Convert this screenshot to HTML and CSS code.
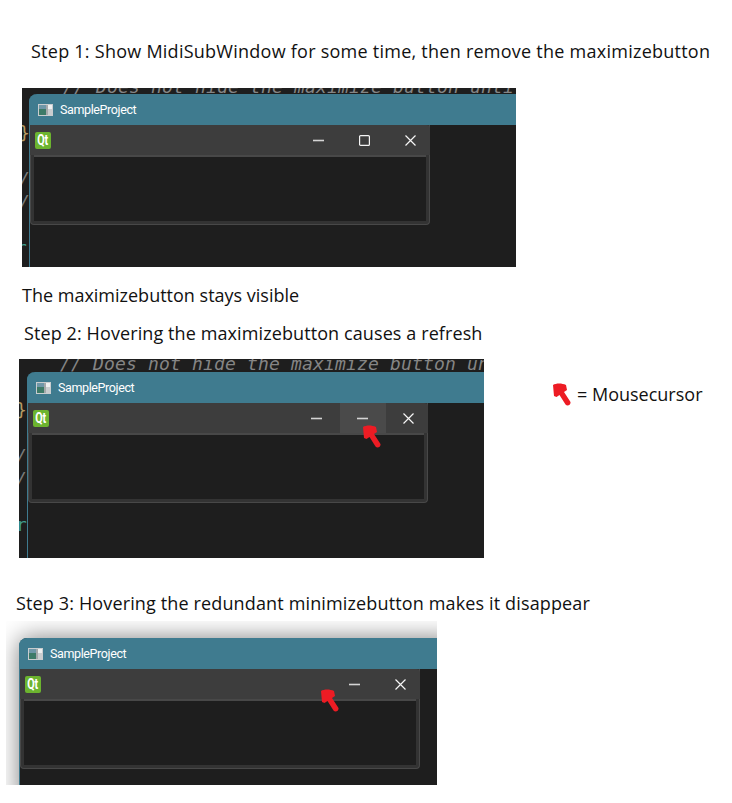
FILE: index.html
```html
<!DOCTYPE html>
<html lang="en">
<head>
<meta charset="utf-8">
<title>MdiSubWindow steps</title>
<link rel="stylesheet" href="styles.css">
</head>
<body>
<svg class="defs" width="0" height="0" aria-hidden="true">
  <symbol id="app" viewBox="0 0 15 12">
    <rect width="15" height="12" fill="#c9cdcf"/>
    <rect x="1" y="1" width="7" height="10" fill="#3d7a68"/>
    <rect x="1" y="1" width="7" height="4" fill="#6f97a8"/>
    <rect x="8" y="1" width="2" height="10" fill="#a4a8aa"/>
    <rect x="10" y="1" width="4" height="4" fill="#eef0f0"/>
  </symbol>
  <symbol id="min" viewBox="0 0 11 11"><rect x="0" y="4.700" width="11" height="1.600" fill="#d4d4d4"/></symbol>
  <symbol id="max" viewBox="0 0 11 11"><rect x=".6" y=".6" width="9.800" height="9.800" rx="1" fill="none" stroke="#f4f4f4" stroke-width="1.200"/></symbol>
  <symbol id="close" viewBox="0 0 11 11"><path d="M.5.5l10 10M10.500.5l-10 10" fill="none" stroke="#f6f6f6" stroke-width="1.200"/></symbol>
  <symbol id="cursor" viewBox="0 0 18 23">
    <path d="M0 2C3 0 9 0 13 2L14 7L11 9L17.500 19C18 22.500 14 23.500 12.500 21.500L6.500 12L3.500 14L1 13Z" fill="#ed1c24"/>
  </symbol>
</svg>

<main class="page">
  <p class="caption step-one">Step 1: Show MidiSubWindow for some time, then remove the maximizebutton</p>

  <section class="shot shot-one">
    <div class="code code-one">
      <div class="line comment">// Does not hide the maximize button until</div>
      <div class="line gutter">&nbsp;</div>
      <div class="line gutter brace">}</div>
      <div class="line gutter">&nbsp;</div>
      <div class="line gutter slash">/</div>
      <div class="line gutter slash">/</div>
      <div class="line gutter">&nbsp;</div>
      <div class="line gutter keyword">r</div>
    </div>
    <div class="window window-one">
      <div class="window-title"><svg class="app-icon"><use href="#app"/></svg><span>SampleProject</span></div>
      <div class="sub">
        <div class="sub-bar">
          <span class="qt"><span class="qt-text">Qt</span></span>
          <span class="btn"><svg class="ico"><use href="#min"/></svg></span>
          <span class="btn"><svg class="ico"><use href="#max"/></svg></span>
          <span class="btn btn-close"><svg class="ico"><use href="#close"/></svg></span>
        </div>
        <div class="sub-body"></div>
      </div>
    </div>
  </section>

  <p class="caption result">The maximizebutton stays visible</p>
  <p class="caption step-two">Step 2: Hovering the maximizebutton causes a refresh</p>

  <div class="row">
    <section class="shot shot-two">
      <div class="code code-two">
        <div class="line comment">// Does not hide the maximize button until</div>
        <div class="line gutter">&nbsp;</div>
        <div class="line gutter brace">}</div>
        <div class="line gutter">&nbsp;</div>
        <div class="line gutter slash">/</div>
        <div class="line gutter slash">/</div>
        <div class="line gutter">&nbsp;</div>
        <div class="line gutter keyword">r</div>
      </div>
      <div class="window window-two">
        <div class="window-title"><svg class="app-icon"><use href="#app"/></svg><span>SampleProject</span></div>
        <div class="sub">
          <div class="sub-bar">
            <span class="qt"><span class="qt-text">Qt</span></span>
            <span class="btn"><svg class="ico"><use href="#min"/></svg></span>
            <span class="btn btn-hover"><svg class="ico"><use href="#min"/></svg></span>
            <span class="btn btn-close"><svg class="ico"><use href="#close"/></svg></span>
          </div>
          <div class="sub-body"></div>
        </div>
      </div>
      <svg class="cursor cursor-two"><use href="#cursor"/></svg>
    </section>
    <p class="legend"><svg class="legend-cursor"><use href="#cursor"/></svg><span>= Mousecursor</span></p>
  </div>

  <p class="caption step-three">Step 3: Hovering the redundant minimizebutton makes it disappear</p>

  <section class="shot shot-three">
    <div class="window window-three">
      <div class="window-title"><svg class="app-icon"><use href="#app"/></svg><span>SampleProject</span></div>
      <div class="sub">
        <div class="sub-bar">
          <span class="qt"><span class="qt-text">Qt</span></span>
          <span class="btn btn-empty"></span>
          <span class="btn"><svg class="ico"><use href="#min"/></svg></span>
          <span class="btn btn-close"><svg class="ico"><use href="#close"/></svg></span>
        </div>
        <div class="sub-body"></div>
      </div>
    </div>
    <svg class="cursor cursor-three"><use href="#cursor"/></svg>
  </section>
</main>
</body>
</html>
```

FILE: styles.css
```css
* { box-sizing: border-box; }
html, body { margin: 0; padding: 0; background: #fff; }
.defs { position: absolute; }
.page {
  display: flex;
  flex-direction: column;
  align-items: flex-start;
  font-family: "Open Sans", "Noto Sans", sans-serif;
  color: #111;
}
.caption {
  margin: 0;
  font-size: 18px;
  line-height: 24px;
  white-space: nowrap;
}
.step-one { margin: 39px 0 0 31px; letter-spacing: .25px; }
.result { margin: 16px 0 0 22px; }
.step-two { margin: 14px 0 0 24px; letter-spacing: .1px; }
.step-three { margin: 33px 0 0 16px; letter-spacing: .14px; }

.shot {
  position: relative;
  overflow: hidden;
  background: #1e1e1e;
  flex: none;
}
.shot-one { width: 494px; height: 179px; margin: 25px 0 0 22px; }
.shot-two { width: 465px; height: 199px; }
.shot-three { width: 431px; height: 164px; margin: 6px 0 0 6px; background: #fff; }

.row { display: flex; align-items: flex-start; margin: 14px 0 0 19px; }
.legend {
  display: flex;
  align-items: center;
  margin: 23px 0 0 69px;
  font-size: 18px;
  line-height: 24px;
  white-space: nowrap;
}
.legend-cursor { width: 18px; height: 23px; margin-right: 6px; }

.code {
  font: italic 18px/23px "DejaVu Sans Mono", "Liberation Mono", monospace;
  letter-spacing: .16px;
  color: #858585;
}
.code-one { margin-top: -13px; }
.code-two { margin-top: -7px; }
.line { height: 23px; white-space: pre; }
.comment { padding-left: 41px; }
.gutter { margin-left: -3px; }
.brace { color: #b59a63; font-style: normal; }
.slash { color: #7a7a7a; }
.keyword { color: #3f9c8c; font-style: normal; }
.code-one .keyword { margin-left: -6px; }

.window {
  position: absolute;
  right: -20px;
  bottom: -20px;
  background: #1e1e1e;
  border-left: 1px solid #3f7b8f;
  border-radius: 8px 0 0 0;
}
.window-one { left: 7px; top: 6px; }
.window-two { left: 8px; top: 13px; }
.window-three { left: 13px; top: 17px; box-shadow: 0 0 24px rgba(0, 0, 0, .5); }

.window-title {
  display: flex;
  align-items: center;
  height: 31px;
  margin-left: -1px;
  padding-left: 9px;
  background: #3f7b8f;
  border-radius: 8px 0 0 0;
  color: #fff;
  font-family: Roboto, "Open Sans", sans-serif;
  font-size: 12.500px;
  letter-spacing: -.38px;
}
.app-icon { width: 15px; height: 12px; margin-right: 7px; flex: none; }

.sub {
  width: 400px;
  height: 100px;
  background: #333;
  border: 1px solid #484848;
  border-top: 0;
  border-radius: 0 0 4px 4px;
  display: flex;
  flex-direction: column;
}
.sub-bar {
  display: flex;
  align-items: center;
  justify-content: flex-end;
  height: 30px;
  margin: 0 -1px;
  background: #3d3d3d;
  overflow: hidden;
  flex: none;
  border-radius: 0 4px 0 0;
}
.qt {
  display: flex;
  justify-content: center;
  width: 16px;
  height: 17px;
  margin-right: auto;
  margin-left: 5px;
  background: #6cb42f;
  border-radius: 2px;
  color: #fff;
  font: bold 15px/17px Roboto, "Open Sans", sans-serif;
}
.qt-text { display: inline-block; transform: scaleX(.72); }
.btn {
  display: flex;
  align-items: center;
  justify-content: center;
  width: 46px;
  height: 30px;
  padding-right: 1px;
  flex: none;
}
.btn-close { margin-right: -4px; }
.btn-hover { background: #4a4a4a; }
.ico { width: 11px; height: 11px; }

.sub-body {
  flex: 1;
  margin: 2px 3px 3px;
  background: #1e1e1e;
  box-shadow: 0 -2px 0 #484848;
}

.cursor { position: absolute; width: 18px; height: 23px; }
.cursor-two { left: 344px; top: 66px; }
.cursor-three { left: 315px; top: 68px; }
```
